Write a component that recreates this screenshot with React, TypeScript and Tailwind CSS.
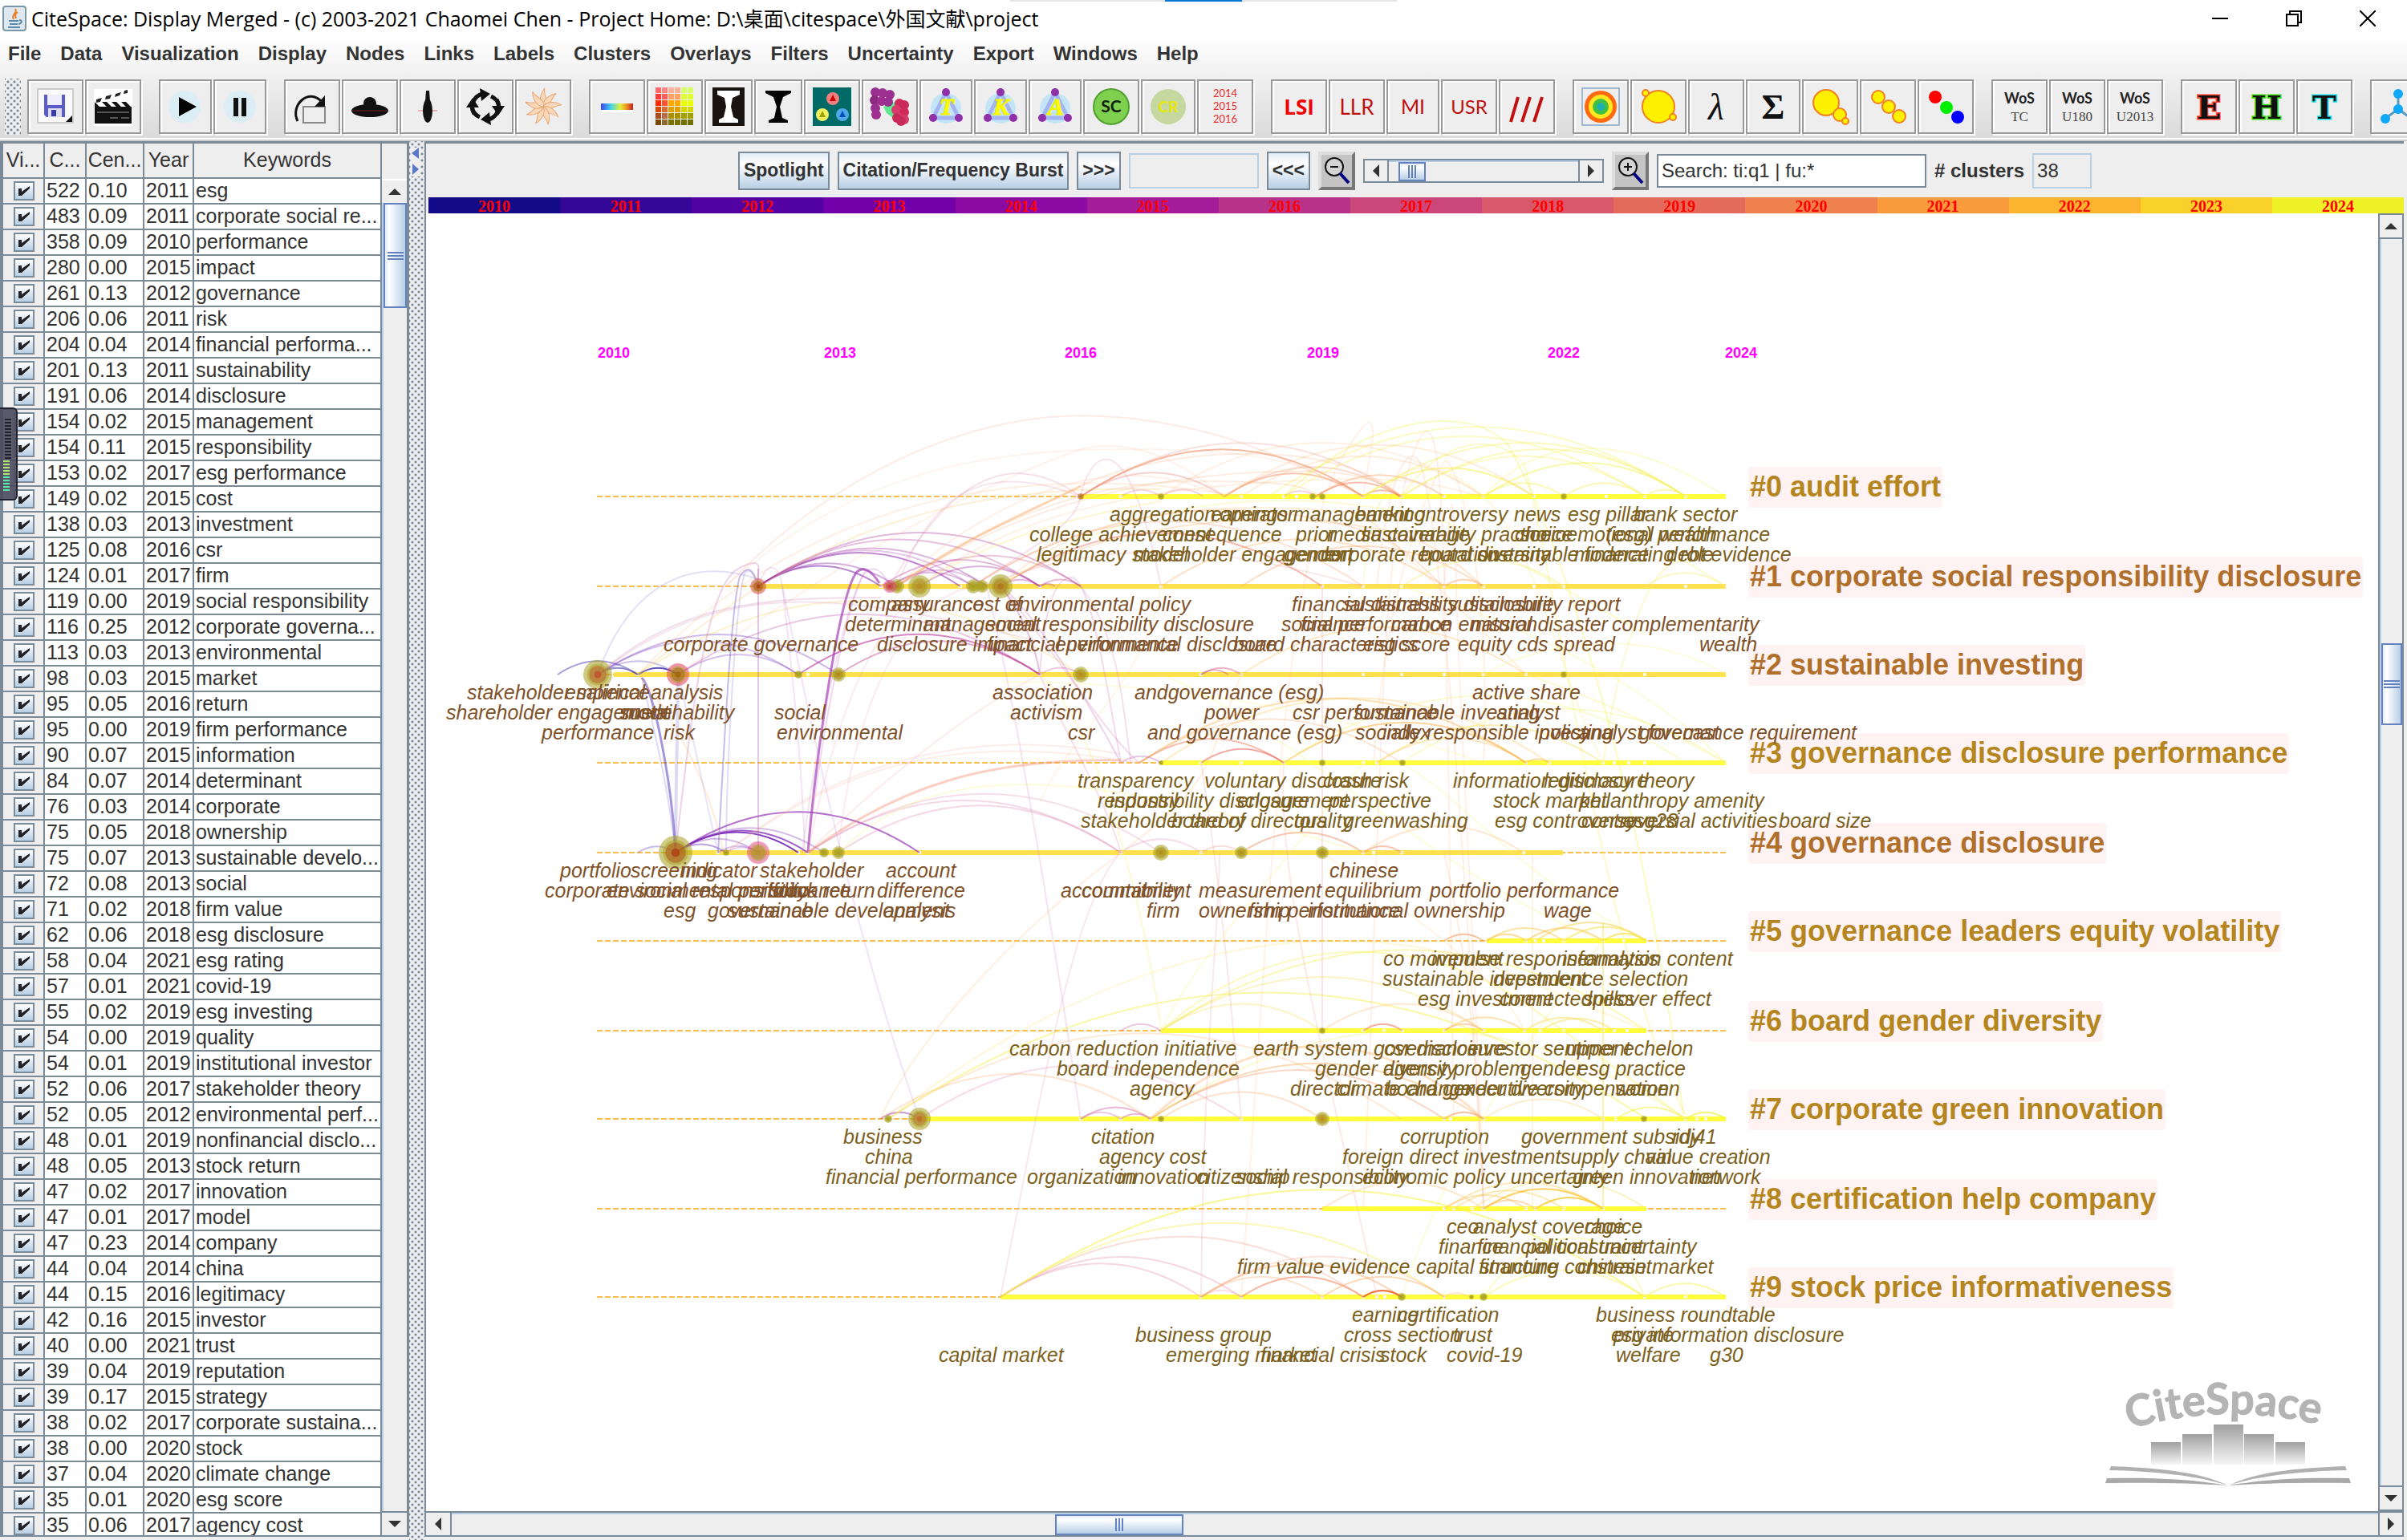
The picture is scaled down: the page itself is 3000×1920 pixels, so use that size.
import { Fragment, ReactNode, useState } from "react";

const MENUS = [
  "File", "Data", "Visualization", "Display", "Nodes", "Links", "Labels", "Clusters",
  "Overlays", "Filters", "Uncertainty", "Export", "Windows", "Help",
];

type Row = [string, string, string, string];

const ROWS: Row[] = [
  ["522", "0.10", "2011", "esg"],
  ["483", "0.09", "2011", "corporate social re..."],
  ["358", "0.09", "2010", "performance"],
  ["280", "0.00", "2015", "impact"],
  ["261", "0.13", "2012", "governance"],
  ["206", "0.06", "2011", "risk"],
  ["204", "0.04", "2014", "financial performa..."],
  ["201", "0.13", "2011", "sustainability"],
  ["191", "0.06", "2014", "disclosure"],
  ["154", "0.02", "2015", "management"],
  ["154", "0.11", "2015", "responsibility"],
  ["153", "0.02", "2017", "esg performance"],
  ["149", "0.02", "2015", "cost"],
  ["138", "0.03", "2013", "investment"],
  ["125", "0.08", "2016", "csr"],
  ["124", "0.01", "2017", "firm"],
  ["119", "0.00", "2019", "social responsibility"],
  ["116", "0.25", "2012", "corporate governa..."],
  ["113", "0.03", "2013", "environmental"],
  ["98", "0.03", "2015", "market"],
  ["95", "0.05", "2016", "return"],
  ["95", "0.00", "2019", "firm performance"],
  ["90", "0.07", "2015", "information"],
  ["84", "0.07", "2014", "determinant"],
  ["76", "0.03", "2014", "corporate"],
  ["75", "0.05", "2018", "ownership"],
  ["75", "0.07", "2013", "sustainable develo..."],
  ["72", "0.08", "2013", "social"],
  ["71", "0.02", "2018", "firm value"],
  ["62", "0.06", "2018", "esg disclosure"],
  ["58", "0.04", "2021", "esg rating"],
  ["57", "0.01", "2021", "covid-19"],
  ["55", "0.02", "2019", "esg investing"],
  ["54", "0.00", "2019", "quality"],
  ["54", "0.01", "2019", "institutional investor"],
  ["52", "0.06", "2017", "stakeholder theory"],
  ["52", "0.05", "2012", "environmental perf..."],
  ["48", "0.01", "2019", "nonfinancial disclo..."],
  ["48", "0.05", "2013", "stock return"],
  ["47", "0.02", "2017", "innovation"],
  ["47", "0.01", "2017", "model"],
  ["47", "0.23", "2014", "company"],
  ["44", "0.04", "2014", "china"],
  ["44", "0.15", "2016", "legitimacy"],
  ["42", "0.16", "2015", "investor"],
  ["40", "0.00", "2021", "trust"],
  ["39", "0.04", "2019", "reputation"],
  ["39", "0.17", "2015", "strategy"],
  ["38", "0.02", "2017", "corporate sustaina..."],
  ["38", "0.00", "2020", "stock"],
  ["37", "0.04", "2020", "climate change"],
  ["35", "0.01", "2020", "esg score"],
  ["35", "0.06", "2017", "agency cost"],
];

const YEARS = [
  ["2010", "bg-[#120a87]"],
  ["2011", "bg-[#350797]"],
  ["2012", "bg-[#5201a3]"],
  ["2013", "bg-[#7200a8]"],
  ["2014", "bg-[#8b0ba4]"],
  ["2015", "bg-[#a41c99]"],
  ["2016", "bg-[#b93289]"],
  ["2017", "bg-[#cb4679]"],
  ["2018", "bg-[#d9586a]"],
  ["2019", "bg-[#e46b5b]"],
  ["2020", "bg-[#ee814d]"],
  ["2021", "bg-[#f99a3d]"],
  ["2022", "bg-[#fcb32e]"],
  ["2023", "bg-[#fad02a]"],
  ["2024", "bg-[#eef126]"],
];

// ---------- timeline data, in window coordinates ----------

const ORIGIN_X = 531;
const ORIGIN_Y = 266;
const GOLD = "#ffe04d";
const YELLOW = "#ffff3c";

interface Cluster {
  y: number;
  name: string;
  from: number;
  to: number;
  bar: string;
  gaps: number[];
  labels: [number, number, string][];
}

const CLUSTERS: Cluster[] = [
  {
    y: 619, name: "#0 audit effort", from: 1347, to: 2151, bar: YELLOW,
    gaps: [1397, 1547, 1600, 1616, 1699, 1747, 1800, 1849, 1912, 2002, 2050, 2101],
    labels: [
      [0, 1383, "aggregation"], [0, 1509, "earnings management"], [0, 1520, "operator"], [0, 1689, "banking"],
      [0, 1750, "controversy"], [0, 1887, "news"], [0, 1954, "esg pillar"], [0, 2036, "bank sector"],
      [1, 1283, "college achievement"], [1, 1449, "consequence"], [1, 1615, "prior"], [1, 1654, "media coverage"],
      [1, 1696, "sustainability practice"], [1, 1888, "choice"], [1, 1894, "socioemotional wealth"], [1, 2002, "(esg) performance"],
      [2, 1292, "legitimacy"], [2, 1411, "stakeholder engagement"], [2, 1413, "model"], [2, 1600, "gender"],
      [2, 1646, "corporate reputation"], [2, 1770, "board diversity"], [2, 1841, "sustainable finance"],
      [2, 1962, "moderating role"], [2, 2077, "debt evidence"],
    ],
  },
  {
    y: 731, name: "#1 corporate social responsibility disclosure", from: 945, to: 2151, bar: GOLD,
    gaps: [1098, 1197, 1296, 1447, 1648, 1699, 1747, 1800, 1849, 1912, 1949, 2101],
    labels: [
      [0, 1057, "company"], [0, 1111, "assurance"], [0, 1200, "cost of"], [0, 1256, "environmental policy"],
      [0, 1610, "financial distress"], [0, 1674, "sustainability disclosure"], [0, 1804, "sustainability report"],
      [1, 1053, "determinant"], [1, 1151, "management"], [1, 1228, "social responsibility disclosure"], [1, 1597, "social performance"],
      [1, 1621, "finance"], [1, 1734, "carbon emission"], [1, 1833, "natural disaster"], [1, 2009, "complementarity"],
      [2, 827, "corporate governance"], [2, 1093, "disclosure impact"], [2, 1230, "financial performance"],
      [2, 1315, "environmental disclosure"], [2, 1537, "board characteristics"], [2, 1699, "esg score"],
      [2, 1817, "equity cds spread"], [2, 2118, "wealth"],
    ],
  },
  {
    y: 841, name: "#2 sustainable investing", from: 765, to: 2151, bar: GOLD,
    gaps: [795, 1007, 1296, 1497, 1547, 1699, 1747, 1800, 1849, 1902, 2050],
    labels: [
      [0, 582, "stakeholder salience"], [0, 704, "empirical analysis"], [0, 1237, "association"],
      [0, 1414, "andgovernance (esg)"], [0, 1835, "active share"],
      [1, 556, "shareholder engagement"], [1, 772, "sustainability"], [1, 775, "model"], [1, 965, "social"], [1, 1259, "activism"],
      [1, 1501, "power"], [1, 1611, "csr performance"], [1, 1687, "sustainable investing"], [1, 1865, "analyst"],
      [2, 675, "performance"], [2, 827, "risk"], [2, 968, "environmental"], [2, 1331, "csr"], [2, 1430, "and governance (esg)"],
      [2, 1689, "socially responsible investing"], [2, 1723, "index"], [2, 1918, "policy"], [2, 1968, "analyst forecast"],
      [2, 2043, "governance requirement"],
    ],
  },
  {
    y: 951, name: "#3 governance disclosure performance", from: 1447, to: 2151, bar: YELLOW,
    gaps: [1497, 1547, 1600, 1699, 1716, 1902, 1931, 1998, 2012, 2030, 2050],
    labels: [
      [0, 1343, "transparency"], [0, 1501, "voluntary disclosure"], [0, 1649, "crash risk"],
      [0, 1811, "information disclosure"], [0, 1924, "legitimacy theory"],
      [1, 1368, "responsibility disclosure"], [1, 1383, "industry"], [1, 1542, "engagement"], [1, 1656, "perspective"],
      [1, 1861, "stock market"], [1, 1968, "philanthropy amenity"],
      [2, 1347, "stakeholder theory"], [2, 1460, "board of directors"], [2, 1613, "quality"], [2, 1674, "greenwashing"],
      [2, 1863, "esg controversy"], [2, 1971, "controversial activities"], [2, 2023, "esg28"], [2, 2217, "board size"],
    ],
  },
  {
    y: 1063, name: "#4 governance disclosure", from: 842, to: 1948, bar: GOLD,
    gaps: [895, 995, 1007, 1146, 1397, 1497, 1699, 1712, 1747, 1899],
    labels: [
      [0, 698, "portfolio"], [0, 786, "screening"], [0, 849, "indicator"], [0, 947, "stakeholder"], [0, 1104, "account"], [0, 1657, "chinese"],
      [1, 679, "corporate social responsibility"], [1, 756, "environmental performance"], [1, 920, "portfolio"], [1, 960, "stock return"],
      [1, 1093, "difference"], [1, 1322, "accountability"], [1, 1348, "commitment"], [1, 1494, "measurement"],
      [1, 1651, "equilibrium"], [1, 1782, "portfolio performance"],
      [2, 827, "esg"], [2, 882, "governance"], [2, 907, "sustainable development"], [2, 1101, "analysis"], [2, 1429, "firm"],
      [2, 1494, "ownership"], [2, 1556, "firm performance"], [2, 1630, "institutional ownership"], [2, 1924, "wage"],
    ],
  },
  {
    y: 1173, name: "#5 governance leaders equity volatility", from: 1853, to: 2052, bar: YELLOW,
    gaps: [1902, 1914, 1924, 1949, 1998, 2024],
    labels: [
      [0, 1724, "co movement"], [0, 1784, "impulse response"], [0, 1947, "information content"], [0, 1977, "analysis"],
      [1, 1723, "sustainable investment"], [1, 1861, "dependence selection"],
      [2, 1767, "esg investment"], [2, 1869, "connectedness"], [2, 1973, "spillover effect"],
    ],
  },
  {
    y: 1285, name: "#6 board gender diversity", from: 1447, to: 2052, bar: YELLOW,
    gaps: [1699, 1725, 1748, 1800, 1849, 1900, 1920, 1949, 1998, 2012, 2028],
    labels: [
      [0, 1258, "carbon reduction initiative"], [0, 1562, "earth system governance"], [0, 1725, "csr disclosure"],
      [0, 1829, "investor sentiment"], [0, 1952, "upper echelon"],
      [1, 1317, "board independence"], [1, 1639, "gender diversity"], [1, 1724, "agency problem"], [1, 1895, "gender"], [1, 1966, "esg practice"],
      [2, 1408, "agency"], [2, 1608, "director"], [2, 1666, "climate change"], [2, 1727, "board gender diversity"],
      [2, 1812, "executive compensation"], [2, 2013, "women"],
    ],
  },
  {
    y: 1395, name: "#7 corporate green innovation", from: 1146, to: 2151, bar: YELLOW,
    gaps: [1347, 1397, 1434, 1547, 1800, 1808, 1849, 1998, 2014, 2101, 2115, 2126],
    labels: [
      [0, 1051, "business"], [0, 1360, "citation"], [0, 1745, "corruption"], [0, 1896, "government subsidy"], [0, 2084, "rdj41"],
      [1, 1078, "china"], [1, 1370, "agency cost"], [1, 1673, "foreign direct investment"], [1, 1945, "supply chain"], [1, 2051, "value creation"],
      [2, 1029, "financial performance"], [2, 1280, "organization"], [2, 1393, "innovation"], [2, 1491, "citizenship"],
      [2, 1540, "social responsibility"], [2, 1698, "economic policy uncertainty"], [2, 1960, "green innovation"], [2, 2107, "network"],
    ],
  },
  {
    y: 1507, name: "#8 certification help company", from: 1648, to: 2052, bar: YELLOW,
    gaps: [1800, 1812, 1835, 1849, 1902, 1914, 1949, 1998],
    labels: [
      [0, 1803, "ceo"], [0, 1836, "analyst coverage"], [0, 1975, "choice"],
      [1, 1793, "finance"], [1, 1841, "financial constraint"], [1, 1902, "political uncertainty"],
      [2, 1542, "firm value evidence"], [2, 1765, "capital structure"], [2, 1843, "financing constraint"], [2, 1966, "chinese market"],
    ],
  },
  {
    y: 1617, name: "#9 stock price informativeness", from: 1247, to: 2151, bar: YELLOW,
    gaps: [1497, 1547, 1648, 1699, 1716, 1726, 1800, 2050, 2101],
    labels: [
      [0, 1685, "earning"], [0, 1742, "certification"], [0, 1989, "business roundtable"],
      [1, 1415, "business group"], [1, 1675, "cross section"], [1, 1811, "trust"], [1, 2008, "esg information disclosure"], [1, 2011, "private"],
      [2, 1170, "capital market"], [2, 1453, "emerging market"], [2, 1571, "financial crisis"], [2, 1720, "stock"],
      [2, 1803, "covid-19"], [2, 2014, "welfare"], [2, 2131, "g30"],
    ],
  },
];

// arcs that stay on one line: cluster, x1, x2, colour, opacity
const HOPS: [number, number, number, string, number][] = [
  [0, 1347, 1699, "#f08050", 0.6], [0, 1526, 1699, "#f08050", 0.5], [0, 1526, 1747, "#f08050", 0.3],
  [0, 1640, 1745, "#f07040", 0.5], [0, 1640, 1800, "#f59050", 0.4], [0, 1699, 1745, "#f07040", 0.5],
  [0, 1347, 1526, "#e06a6a", 0.35], [0, 1347, 1747, "#e07a6a", 0.25], [0, 1397, 1447, "#d0609a", 0.3],
  [0, 1447, 1500, "#d0609a", 0.3], [0, 1600, 1640, "#d0609a", 0.3], [0, 1580, 2101, "#f6f060", 0.4],
  [0, 1600, 2050, "#f6f060", 0.4], [0, 1699, 2101, "#f6f060", 0.45], [0, 1849, 1949, "#f6f060", 0.5],
  [0, 1699, 1912, "#f6f060", 0.7], [0, 1849, 2101, "#f0f040", 0.5], [0, 1747, 2101, "#f6f060", 0.45],
  [0, 1547, 1849, "#fbc080", 0.3], [0, 1526, 1912, "#fbc080", 0.3], [0, 1447, 1849, "#fbc080", 0.25],
  [0, 1949, 2050, "#f6f060", 0.5], [0, 2050, 2101, "#f6f060", 0.5], [0, 1747, 2050, "#f6f060", 0.4],
  [1, 945, 1197, "#8a1fa8", 0.6], [1, 945, 1098, "#7a1fa8", 0.6], [1, 945, 1230, "#a030a0", 0.4],
  [1, 945, 1296, "#b03a9a", 0.35], [1, 945, 1347, "#b03a9a", 0.4], [1, 945, 1213, "#a030b0", 0.3],
  [1, 945, 1118, "#8a1fa8", 0.4], [1, 1098, 1296, "#b03aa0", 0.4], [1, 1118, 1347, "#c04a90", 0.35],
  [1, 1109, 1213, "#a030a0", 0.35], [1, 1109, 1230, "#a030a0", 0.3], [1, 1146, 1296, "#a030a0", 0.4],
  [1, 1296, 1347, "#c04a90", 0.4], [1, 1296, 1315, "#b03aa0", 0.4], [1, 1247, 1296, "#b03aa0", 0.4],
  [1, 1247, 1648, "#e86a5a", 0.5], [1, 1213, 1699, "#f09060", 0.3], [1, 1447, 1800, "#fbb060", 0.4],
  [1, 1547, 1849, "#f8a060", 0.4], [1, 1800, 1849, "#f8a060", 0.5], [1, 1747, 1949, "#f6f080", 0.5], [1, 2050, 2151, "#f6f080", 0.5],
  [2, 695, 795, "#3a2aa8", 0.5], [2, 745, 795, "#3a2aa8", 0.6], [2, 795, 845, "#3a2aa8", 0.9],
  [2, 745, 845, "#5a3ab8", 0.35], [2, 745, 995, "#7a3ac0", 0.35], [2, 745, 1045, "#7a3ac0", 0.4],
  [2, 845, 995, "#7a3ac0", 0.35], [2, 845, 1296, "#b0309a", 0.3], [2, 995, 1296, "#b8309a", 0.65],
  [2, 1045, 1296, "#c04a90", 0.5], [2, 795, 1347, "#f0d050", 0.3], [2, 1296, 1347, "#d070a0", 0.4],
  [2, 1497, 1547, "#d05a80", 0.5], [2, 1497, 1531, "#d05a80", 0.5], [2, 1547, 1902, "#fbc060", 0.4],
  [3, 1420, 1600, "#ee7050", 0.5], [3, 1420, 1902, "#fbb040", 0.45], [3, 1497, 1600, "#e8605a", 0.6],
  [3, 1420, 1747, "#f0a060", 0.3], [3, 1600, 1902, "#fbb040", 0.6], [3, 1716, 1902, "#fbb040", 0.35],
  [3, 1397, 1447, "#c060c0", 0.4], [3, 1447, 1931, "#fbc050", 0.35], [3, 1902, 1931, "#fbb040", 0.5],
  [3, 1716, 1998, "#f6e060", 0.5], [3, 1600, 2101, "#f6f080", 0.4], [3, 1747, 2151, "#f6f080", 0.4],
  [4, 842, 1146, "#8a1fb0", 0.7], [4, 842, 995, "#6a10b0", 0.9], [4, 842, 1007, "#7a20b8", 0.8],
  [4, 842, 1027, "#8a40c0", 0.4], [4, 842, 905, "#6a30b8", 0.5], [4, 842, 945, "#8a40c0", 0.4],
  [4, 795, 842, "#6a40c0", 0.4], [4, 895, 945, "#9a50c8", 0.4], [4, 905, 945, "#9a50c8", 0.3],
  [4, 1007, 1397, "#d870a0", 0.3], [4, 1007, 1447, "#d870a0", 0.25], [4, 1045, 1397, "#d870a0", 0.3],
  [4, 1547, 1699, "#f08050", 0.5], [4, 1699, 1747, "#f08050", 0.5], [4, 1497, 1547, "#e08080", 0.3], [4, 1699, 1899, "#fbc080", 0.4],
  [4, 1397, 1497, "#d880b0", 0.3],
  [5, 1800, 1849, "#f59050", 0.6], [5, 1853, 1902, "#fbc040", 0.6], [5, 1902, 1998, "#fbc040", 0.6],
  [5, 1914, 2052, "#f8d050", 0.6], [5, 1949, 2052, "#f6e040", 0.6], [5, 1998, 2052, "#f6e040", 0.8], [5, 1853, 1949, "#fbc040", 0.5],
  [6, 1397, 1447, "#d060a0", 0.4], [6, 1699, 1748, "#f06a50", 0.6], [6, 1800, 1849, "#f8a060", 0.5],
  [6, 1447, 1648, "#f6e060", 0.4], [6, 1447, 2052, "#f6f060", 0.5], [6, 1447, 1849, "#f6e060", 0.4],
  [6, 1800, 1900, "#fbc050", 0.5], [6, 1900, 1998, "#f6e060", 0.6], [6, 1920, 2012, "#f6e060", 0.6], [6, 1648, 1849, "#fbc080", 0.4],
  [7, 1097, 1146, "#8a20b0", 0.5], [7, 1347, 1397, "#d060b0", 0.4], [7, 1347, 1434, "#d060a0", 0.5],
  [7, 1397, 1434, "#d060a0", 0.5], [7, 1146, 1547, "#e080b0", 0.3], [7, 1097, 1434, "#fbb070", 0.35],
  [7, 1107, 1747, "#fbb070", 0.3], [7, 1107, 2052, "#f6f060", 0.6], [7, 1434, 1849, "#fbb060", 0.5],
  [7, 1434, 1800, "#f09060", 0.4], [7, 1447, 1648, "#fbb070", 0.4], [7, 1434, 2101, "#f6f080", 0.4],
  [7, 1800, 1849, "#f59050", 0.6], [7, 2014, 2101, "#f0f040", 0.6], [7, 2101, 2151, "#f0f040", 0.8], [7, 1849, 1998, "#fbd080", 0.4],
  [8, 1648, 1849, "#fbc080", 0.4], [8, 1800, 1902, "#fbc060", 0.5], [8, 1812, 1949, "#fbd060", 0.5],
  [8, 1849, 1998, "#fbc020", 0.8], [8, 1849, 1914, "#f8b060", 0.5], [8, 1914, 1998, "#fbc020", 0.7],
  [8, 1800, 1998, "#fbd060", 0.5], [8, 1835, 2052, "#f6e080", 0.5], [8, 1914, 1998, "#f6d040", 0.5],
  [9, 1247, 1497, "#e080a0", 0.35], [9, 1247, 1547, "#e080a0", 0.35], [9, 1247, 1699, "#f09a80", 0.35],
  [9, 1247, 1800, "#f6f060", 0.5], [9, 1247, 2050, "#f6f040", 0.6], [9, 1497, 1648, "#fbb080", 0.4],
  [9, 1497, 1747, "#f8a060", 0.5], [9, 1547, 1699, "#f07a50", 0.6], [9, 1497, 1547, "#f090a0", 0.3],
  [9, 1648, 1800, "#f8b060", 0.5], [9, 1699, 1747, "#f06020", 0.8], [9, 1699, 1747, "#f06020", 0.6],
  [9, 1497, 1800, "#f8a080", 0.3], [9, 1849, 2050, "#f0f040", 0.4], [9, 1800, 1830, "#fbc080", 0.4], [9, 2050, 2151, "#f0f040", 0.5],
];

// links between lines, drawn as plain path data
const LINKS: [string, string, number, number][] = [
  ["M842 1063C838 980 815 860 800 845", "#4a2ab8", 0.7, 3],
  ["M842 1063C830 960 812 900 800 845", "#6a50c8", 0.3, 2],
  ["M842 1063C842 980 845 900 845 841", "#6a50c8", 0.3, 4],
  ["M842 1063C860 900 880 730 920 709S940 720 945 731", "#c060a8", 0.4, 2],
  ["M895 1063C900 980 910 760 922 719Q934 700 942 722", "#5a40c0", 0.5, 2],
  ["M905 1063C905 980 915 760 928 715Q936 704 945 731", "#8a70d0", 0.35, 2],
  ["M945 1063V709", "#b060b8", 0.5, 2],
  ["M1007 1063C1015 960 1045 740 1068 713Q1080 702 1096 727", "#9a2ab0", 0.9, 3],
  ["M1007 1063C1020 940 1055 740 1080 712Q1096 702 1109 731", "#c060c0", 0.35, 2],
  ["M1000 1063C1015 940 1050 760 1078 712", "#c880c8", 0.3, 2],
  ["M945 731C955 700 970 700 975 731C990 860 1000 960 1003 1063", "#d090d0", 0.35, 2],
  ["M745 841C780 740 850 690 945 722", "#8a80e0", 0.35, 2],
  ["M745 841C850 750 950 745 1098 745", "#c060a0", 0.3, 2],
  ["M745 841C900 720 1040 735 1296 800", "#d080b0", 0.3, 2],
  ["M795 841C900 730 1040 640 1230 612Q1380 590 1547 619", "#fbc090", 0.35, 2],
  ["M795 841C950 720 1100 600 1447 610", "#fbd080", 0.45, 2],
  ["M795 841C830 880 880 960 902 1063", "#fbb060", 0.35, 2],
  ["M845 841C860 900 880 1000 895 1063", "#8a80e0", 0.3, 2],
  ["M905 731C1040 590 1200 520 1347 518C1500 520 1600 570 1699 619", "#f8b8a0", 0.4, 2],
  ["M905 731C1050 600 1200 560 1400 560S1620 580 1699 619", "#fbc0a0", 0.25, 2],
  ["M842 841C1000 740 1150 630 1347 560Q1430 540 1526 619", "#fbc0a0", 0.3, 2],
  ["M1109 731C1160 640 1210 590 1270 590Q1310 592 1347 619", "#e090b0", 0.4, 2],
  ["M1118 731C1160 620 1220 570 1347 619", "#e090b0", 0.35, 2],
  ["M1213 731C1270 690 1340 660 1347 619S1400 500 1447 731", "#e090b0", 0.35, 2],
  ["M1118 731C1200 670 1280 640 1347 606", "#f8a860", 0.7, 3],
  ["M1347 606C1440 560 1660 540 1747 619", "#f8b080", 0.35, 2],
  ["M1118 731C1220 660 1340 600 1490 600S1620 610 1648 619", "#f8b080", 0.35, 2],
  ["M1118 731C1250 640 1400 600 1547 590S1720 600 1747 619", "#f8b080", 0.35, 2],
  ["M1146 731C1260 640 1420 610 1600 600S1800 610 1849 619", "#fbc080", 0.3, 2],
  ["M1118 731C1200 650 1290 612 1347 600S1460 590 1526 619", "#fbc0a0", 0.35, 2],
  ["M1146 731C1230 670 1360 640 1447 625", "#f6e880", 0.5, 2],
  ["M1213 731C1300 670 1450 620 1600 640S1760 700 1800 731", "#f8a070", 0.4, 2],
  ["M1247 731C1340 670 1500 640 1640 650S1800 690 1849 731", "#f8a860", 0.4, 2],
  ["M1247 731C1400 620 1600 600 1800 650T2050 790", "#f6f080", 0.5, 2],
  ["M1247 731C1340 640 1500 620 1700 640T1902 841", "#fbc880", 0.4, 2],
  ["M1224 731C1400 660 1550 690 1699 731", "#f0a0a0", 0.35, 2],
  ["M1247 731C1290 760 1370 900 1397 951", "#c060b0", 0.4, 2],
  ["M1247 731C1300 790 1380 920 1420 951", "#d080b0", 0.4, 2],
  ["M1247 731C1270 760 1290 800 1296 841", "#b84a9a", 0.5, 2],
  ["M1296 841C1300 780 1310 720 1335 720S1380 860 1397 951", "#d080b0", 0.4, 2],
  ["M1347 731C1400 800 1400 900 1410 951", "#d080b0", 0.35, 2],
  ["M1230 731C1270 900 1310 1150 1347 1395", "#d090c8", 0.35, 2],
  ["M1296 841C1320 900 1380 1000 1397 1063", "#d880b0", 0.35, 2],
  ["M975 731C1010 900 1060 1150 1146 1395", "#c090d8", 0.35, 2],
  ["M1397 1063C1340 1120 1300 1350 1247 1617", "#e0a0b8", 0.35, 2],
  ["M1296 841C1180 900 1050 1020 1007 1063", "#f0b0b0", 0.35, 2],
  ["M1007 1063C1120 980 1230 945 1397 948", "#f09070", 0.6, 3],
  ["M905 1063C1020 970 1180 900 1397 940", "#f0a8a0", 0.3, 2],
  ["M905 1063C1080 930 1230 920 1420 951", "#f8b8a0", 0.35, 2],
  ["M1045 1063C1150 960 1300 940 1700 1063", "#f6f080", 0.4, 2],
  ["M1045 1063C1060 900 1120 750 1213 731", "#e8a0b8", 0.3, 2],
  ["M1007 1063C1040 900 1080 800 1140 740", "#e8a0b8", 0.3, 2],
  ["M1097 1395C1150 1280 1280 1150 1397 1063S1500 960 1547 841", "#fbc890", 0.4, 2],
  ["M1296 841C1370 900 1430 1150 1447 1285", "#f6f080", 0.5, 2],
  ["M1447 731C1430 850 1330 920 1296 1000", "#fbd0a0", 0.3, 2],
  ["M1648 731V1285", "#f0a0a0", 0.4, 2],
  ["M1547 1617C1580 1150 1600 700 1670 576S1699 600 1699 619", "#f8c0a0", 0.3, 2],
  ["M1497 1617C1500 1300 1520 1150 1520 1063", "#e8a0a8", 0.35, 2],
  ["M1547 1395C1530 1200 1520 1100 1497 951", "#e8a0a8", 0.35, 2],
  ["M1600 951C1590 1100 1660 1350 1716 1617", "#f0a8a0", 0.35, 2],
  ["M1699 1507C1720 1100 1715 700 1760 570S1800 700 1812 1395", "#f8c0a0", 0.35, 2],
  ["M1716 731C1730 600 1750 560 1765 570S1810 760 1849 1500", "#f8b8a0", 0.35, 2],
  ["M1800 731C1808 600 1812 590 1815 731S1840 1200 1849 1507", "#f8b8a0", 0.3, 2],
  ["M1849 951C1860 700 1810 560 1800 576S1730 700 1712 951", "#f8c8a0", 0.35, 2],
  ["M1699 731C1710 560 1780 560 1849 619S1960 900 2000 951", "#f6e880", 0.4, 2],
  ["M1600 619C1700 520 1830 500 1880 555C1950 680 2050 1000 2098 1390", "#f0f040", 0.45, 2],
  ["M1747 619C1800 540 1870 540 1900 580C1940 720 2000 1200 2101 1390", "#f6f060", 0.45, 2],
  ["M1849 619C1940 520 2060 560 2151 619", "#f6f060", 0.4, 2],
  ["M1447 1285C1600 1150 1780 1170 1900 1250T2101 1395", "#f6f060", 0.6, 2],
  ["M1107 1395C1400 1170 1650 1140 1849 1200T2052 1285", "#fbe060", 0.35, 2],
  ["M1434 1395C1550 1290 1700 1260 1849 1395", "#f8a860", 0.5, 3],
  ["M1998 1150V1507", "#f6e040", 0.6, 2],
  ["M1910 1063V1507", "#fbd0a0", 0.4, 2],
  ["M1849 1507C1840 1300 1830 1200 1800 1063", "#f8b890", 0.35, 2],
  ["M1747 1617C1800 1450 1900 1300 1998 1173", "#f6f080", 0.4, 2],
  ["M1648 1063C1700 1100 1860 1200 1900 1285", "#fbd090", 0.35, 2],
  ["M1747 951C1830 1000 1900 1100 2052 1173", "#f6f080", 0.4, 2],
  ["M1447 841C1600 900 1800 1100 1998 1173", "#f6f080", 0.4, 2],
  ["M1250 850C1500 850 1700 900 1849 951", "#f6f080", 0.35, 2],
  ["M1447 1285C1500 1180 1600 1080 1699 951", "#f6f080", 0.4, 2],
  ["M1849 1617C1900 1540 2000 1500 2050 1617", "#f0f040", 0.4, 2],
  ["M1998 951C2020 800 2060 690 2101 700T2151 731", "#f6f080", 0.5, 2],
  ["M1849 841C1920 800 2050 780 2151 841", "#f6f080", 0.4, 2],
  ["M1902 841C1960 860 2060 900 2151 951", "#f6f080", 0.5, 2],
  ["M1747 731C1900 780 2050 850 2151 951", "#f6f080", 0.4, 2],
];

const OLIVE = "#a8a020";
const RED = "#b04818";
// x, y, r, halo, core
const NODES: [number, number, number, string, string][] = [
  [745, 841, 18, OLIVE, "#c05a30"], [845, 841, 14, "#e0405a", "#a06a10"], [995, 841, 5, OLIVE, OLIVE],
  [1045, 841, 9, OLIVE, "#b08a20"], [1347, 841, 10, OLIVE, "#b88a20"], [1949, 841, 4, OLIVE, OLIVE],
  [945, 731, 10, "#d84a4a", RED], [1118, 731, 9, OLIVE, "#b08a20"], [1109, 731, 8, "#e83a9a", "#d0305a"],
  [1146, 731, 14, OLIVE, "#b8902a"], [1213, 731, 9, OLIVE, OLIVE], [1224, 731, 8, OLIVE, OLIVE],
  [1247, 731, 15, OLIVE, "#b07a20"],
  [842, 1063, 21, OLIVE, RED], [945, 1063, 14, "#e0508a", "#b89030"], [905, 1063, 4, OLIVE, OLIVE],
  [1027, 1063, 6, OLIVE, OLIVE], [1045, 1063, 8, OLIVE, OLIVE], [1447, 1063, 10, OLIVE, "#b09020"],
  [1547, 1063, 8, OLIVE, "#b09020"], [1648, 1063, 8, OLIVE, "#b09020"],
  [1347, 619, 4, "#c06a30", "#c06a30"], [1447, 619, 4, OLIVE, OLIVE], [1636, 619, 4, OLIVE, OLIVE],
  [1648, 619, 4, OLIVE, OLIVE], [1949, 619, 4, OLIVE, OLIVE],
  [1447, 951, 3, OLIVE, OLIVE], [1648, 951, 4, OLIVE, OLIVE], [1748, 951, 4, OLIVE, OLIVE],
  [1648, 1285, 4, OLIVE, OLIVE], [1107, 1395, 5, OLIVE, OLIVE], [1146, 1395, 14, OLIVE, "#c07030"],
  [1447, 1395, 4, OLIVE, OLIVE], [1648, 1395, 9, OLIVE, "#c09020"], [2049, 1395, 4, OLIVE, OLIVE],
  [1747, 1617, 5, OLIVE, OLIVE], [1834, 1617, 3, OLIVE, OLIVE], [1849, 1617, 5, OLIVE, OLIVE],
];

const AXIS: [number, string][] = [
  [765, "2010"], [1047, "2013"], [1347, "2016"], [1649, "2019"], [1949, "2022"], [2170, "2024"],
];

// ---------- icons ----------

function Triangle({ dir }: { dir: "up" | "down" | "left" | "right" }) {
  const d = {
    up: "M8 4L16 12H0Z",
    down: "M0 4H16L8 12Z",
    left: "M4 8L12 0V16Z",
    right: "M12 8L4 0V16Z",
  }[dir];
  return (
    <svg viewBox="0 0 16 16" className="w-4 h-4" fill="#333">
      <path d={d} />
    </svg>
  );
}

function Graph({ letter }: { letter: string }) {
  return (
    <>
      <circle cx="24" cy="26" r="19" fill="#c4e4f8" />
      <path d="M24 6L8 38H40Z" fill="none" stroke="#a4b4f0" strokeWidth="5" />
      <circle cx="24" cy="6" r="5" fill="#9030a8" />
      <circle cx="8" cy="38" r="5" fill="#9030a8" />
      <circle cx="40" cy="38" r="5" fill="#9030a8" />
      <text
        x="25" y="34" textAnchor="middle" fill="#ffff00" stroke="#f0f000" strokeWidth="1"
        className="font-['Liberation_Serif'] text-[30px] italic font-bold"
      >
        {letter}
      </text>
    </>
  );
}

const HEAT = ["#ff6a6a", "#ff3a3a", "#ff2a00", "#d84a00", "#a84a20", "#784a00"];
const HEAT_MID = ["#ffb09a", "#ffa060", "#ffa800", "#e0a000", "#a89000", "#787000"];
const HEAT_END = ["#d8ff6a", "#e0ff30", "#e8ff00", "#d8d800", "#a0a000", "#707000"];

const BLOBS: [number, number, string][] = [
  [6, 6, "#9a3090"], [15, 7, "#a03090"], [24, 9, "#9a3090"], [5, 16, "#8a2a80"], [14, 17, "#a03090"], [22, 18, "#9a3090"],
  [6, 26, "#9a3090"], [7, 34, "#a03090"], [36, 20, "#d02a5a"], [42, 22, "#c82a5a"], [32, 28, "#d83a6a"], [42, 31, "#d02a5a"],
  [33, 38, "#c82a5a"], [42, 40, "#d83a6a"], [38, 42, "#c82a5a"],
];

const icons: Record<string, ReactNode> = {
  save: (
    <>
      <rect x="2" y="2" width="44" height="42" fill="#fafafa" stroke="#ccc" strokeWidth="2" />
      <path d="M10 9H36V37H13L10 34Z" fill="#5a5ac8" />
      <rect x="14" y="9" width="18" height="13" fill="#eef" />
      <rect x="15" y="26" width="17" height="11" fill="#dde" />
      <rect x="19" y="28" width="6" height="8" fill="#3a3aa8" />
      <path d="M45 35V43H37Z" fill="#111" />
    </>
  ),
  clapper: (
    <>
      <rect width="48" height="46" y="2" fill="#fff" />
      <path d="M3 15l7-2-2 5-5 1ZM15 11l7-2-2 5-6 1ZM27 8l7-2-2 4-6 2ZM38 4l4-1v4l-5 1Z" fill="#222" />
      <path d="M1 24H47V45H1Z" fill="#111" />
      <path d="M1 18l6 6H1ZM10 18h6l6 6h-6ZM22 18h6l6 6h-6ZM34 18h6l6 6h-6Z" fill="#111" />
      <path d="M4 31H44M20 38H30M34 38H44" stroke="#555" strokeWidth="2" />
    </>
  ),
  play: (
    <>
      <circle cx="23" cy="24" r="20" fill="#dceef5" />
      <path d="M16 12L38 24L16 36Z" fill="#050505" />
    </>
  ),
  pause: (
    <>
      <circle cx="24" cy="24" r="20" fill="#dceef5" />
      <path d="M16 13h6v23h-6ZM26 13h6v23h-6Z" fill="#111" />
    </>
  ),
  rotate: (
    <>
      <rect x="13" y="24" width="27" height="20" fill="#eee" stroke="#888" strokeWidth="2" />
      <path d="M6 42C-4 22 20 0 36 18" fill="none" stroke="#111" strokeWidth="3" />
      <path d="M40 10V24H27Z" fill="#111" />
    </>
  ),
  wide: (
    <>
      <circle cx="24" cy="20" r="8" fill="#111" />
      <ellipse cx="24" cy="29" rx="23" ry="8" fill="#111" />
      <path d="M2 29H46" stroke="#802020" strokeWidth="1" />
    </>
  ),
  tall: (
    <>
      <path d="M12 29H36" stroke="#f0b0b0" strokeWidth="2" />
      <ellipse cx="24" cy="29" rx="6" ry="15" fill="#111" />
      <path d="M22 4h4l1 14h-6Z" fill="#111" />
    </>
  ),
  refresh: (
    <>
      <path d="M10 33A17 17 0 0 1 20 8M38 15A17 17 0 0 1 28 40" fill="none" stroke="#111" strokeWidth="5" />
      <path d="M31 11A17 17 0 0 1 41 24M17 37A17 17 0 0 1 7 24" fill="none" stroke="#111" strokeWidth="5" />
      <path d="M17 1L30 8L19 17ZM48 23L40 35L32 23ZM31 47L18 40L29 31ZM0 25L8 13L16 25Z" fill="#111" />
    </>
  ),
  burst: (
    <g fill="#f8d8b8" stroke="#e8a878" strokeWidth="1">
      {[0, 40, 80, 120, 160, 200, 240, 280, 320].map((a) => (
        <path key={a} d="M24 24C18 18 20 8 26 1C24 9 30 14 27 22Z" transform={`rotate(${a} 24 24)`} />
      ))}
    </g>
  ),
  rainbow: (
    <>
      <defs>
        <linearGradient id="rb">
          <stop offset="0" stopColor="#4040f0" />
          <stop offset="0.3" stopColor="#40d0f0" />
          <stop offset="0.6" stopColor="#e0f040" />
          <stop offset="0.8" stopColor="#f09020" />
          <stop offset="1" stopColor="#c02020" />
        </linearGradient>
      </defs>
      <rect x="4" y="20" width="40" height="8" fill="url(#rb)" />
      <rect x="4" y="28" width="40" height="3" fill="#fff" />
    </>
  ),
  heat: (
    <>
      {HEAT.map((c, r) => (
        <Fragment key={c}>
          <rect x="0" y={r * 8} width="7" height="7" fill={c} />
          <rect x="8" y={r * 8} width="7" height="7" fill={c} opacity="0.8" />
          <rect x="16" y={r * 8} width="7" height="7" fill={HEAT_MID[r]} />
          <rect x="24" y={r * 8} width="7" height="7" fill={HEAT_MID[r]} />
          <rect x="32" y={r * 8} width="7" height="7" fill={HEAT_END[r]} />
          <rect x="40" y={r * 8} width="7" height="7" fill={HEAT_END[r]} />
        </Fragment>
      ))}
    </>
  ),
  columnDark: (
    <>
      <rect x="4" width="40" height="48" fill="#1a1410" />
      <path d="M10 4H38V9L29 13L27 24L30 37L36 40V44H12V40L18 37L21 24L19 13L10 9Z" fill="#fff" />
    </>
  ),
  column: <path d="M8 4H40V7L30 12L26 24L29 38L36 41V44H12V41L19 38L22 24L18 12L8 7Z" fill="#050505" />,
  trio: (
    <>
      <rect width="48" height="48" fill="#006a66" />
      <circle cx="25" cy="14" r="8" fill="#f08080" />
      <circle cx="12" cy="34" r="8" fill="#f0f060" />
      <circle cx="37" cy="34" r="8" fill="#50a8e8" />
      <path d="M25 9l4 8h-8Z" fill="#c00" />
      <path d="M12 29l4 8H8Z" fill="#a0a000" />
      <path d="M37 29l4 8h-8Z" fill="#0050c0" />
    </>
  ),
  blobs: (
    <>
      <path d="M16 24L30 18L46 24L28 38L20 32Z" fill="#60e890" />
      {BLOBS.map(([x, y, c]) => (
        <circle key={`${x}-${y}`} cx={x} cy={y} r="6" fill={c} />
      ))}
    </>
  ),
  graphT: <Graph letter="T" />,
  graphK: <Graph letter="K" />,
  graphA: <Graph letter="A" />,
  sc: (
    <>
      <circle cx="24" cy="24" r="22" fill="#80d050" stroke="#50a030" strokeWidth="2" />
      <text x="24" y="31" textAnchor="middle" fill="#102010" className="font-['Lato'] text-[21px] font-bold">SC</text>
    </>
  ),
  cr: (
    <>
      <circle cx="24" cy="24" r="22" fill="#c4d8a0" />
      <text x="24" y="31" textAnchor="middle" fill="#e8e800" className="font-['Lato'] text-[19px] font-bold">CR</text>
    </>
  ),
  years: (
    <g fill="#e03030" textAnchor="middle" className="font-['Lato'] text-[13px]">
      <text x="24" y="12">2014</text>
      <text x="24" y="28">2015</text>
      <text x="24" y="44">2016</text>
    </g>
  ),
  lsi: <text x="24" y="34" textAnchor="middle" fill="#f00000" className="font-['Open_Sans'] text-[26px] font-bold">LSI</text>,
  llr: <text x="24" y="34" textAnchor="middle" fill="#c01010" className="font-['Lato'] text-[26px]">LLR</text>,
  mi: <text x="24" y="33" textAnchor="middle" fill="#c01010" className="font-['Lato'] text-[25px]">MI</text>,
  usr: <text x="24" y="33" textAnchor="middle" fill="#c01010" className="font-['Lato'] text-[24px]">USR</text>,
  slashes: <path d="M4 43L13 12M18 43L28 12M33 43L43 12" stroke="#c01010" strokeWidth="4" fill="none" />,
  target: (
    <>
      <rect x="1" y="1" width="46" height="46" fill="none" stroke="#a0b8d0" strokeWidth="2" />
      <circle cx="24" cy="24" r="20" fill="#ff6a10" />
      <circle cx="24" cy="24" r="15" fill="#ffe820" />
      <circle cx="24" cy="24" r="10" fill="#40c040" />
      <circle cx="24" cy="24" r="5" fill="#20b0b0" />
    </>
  ),
  sun: (
    <g fill="#fff000" stroke="#f08020" strokeWidth="2">
      <circle cx="24" cy="24" r="20" />
      <circle cx="8" cy="7" r="4" />
      <circle cx="42" cy="37" r="4" />
    </g>
  ),
  lambda: <text x="24" y="40" textAnchor="middle" fill="#111" className="font-['Liberation_Serif'] text-[46px] italic">λ</text>,
  sigma: <text x="24" y="39" textAnchor="middle" fill="#111" className="font-['Liberation_Serif'] text-[44px] font-bold">Σ</text>,
  ballsDown: (
    <g fill="#fff000" stroke="#f08020" strokeWidth="2">
      <circle cx="19" cy="19" r="16" />
      <circle cx="36" cy="34" r="8" />
      <circle cx="43" cy="42" r="4" />
    </g>
  ),
  ballsThree: (
    <g fill="#fff000" stroke="#f08020" strokeWidth="2">
      <circle cx="12" cy="12" r="8" />
      <circle cx="25" cy="24" r="8" />
      <circle cx="38" cy="36" r="8" />
    </g>
  ),
  rgb: (
    <>
      <circle cx="11" cy="12" r="8" fill="#ff0000" />
      <circle cx="25" cy="25" r="8" fill="#00f000" />
      <circle cx="39" cy="37" r="8" fill="#0000ff" />
    </>
  ),
  wosTc: <Wos sub="TC" />,
  wosU180: <Wos sub="U180" />,
  wosU2013: <Wos sub="U2013" />,
  e: <Slab letter="E" glow="#ff4030" />,
  h: <Slab letter="H" glow="#40e010" />,
  t: <Slab letter="T" glow="#20e0e8" />,
  network: (
    <>
      <path d="M24 8V27L9 38M24 27L42 40" stroke="#5a9ac0" strokeWidth="3" fill="none" />
      <circle cx="24" cy="8" r="6" fill="#10a8f8" />
      <circle cx="24" cy="27" r="6" fill="#10a8f8" />
      <circle cx="8" cy="39" r="6" fill="#10a8f8" />
      <circle cx="42" cy="40" r="6" fill="#10a8f8" />
    </>
  ),
};

function Wos({ sub }: { sub: string }) {
  return (
    <g textAnchor="middle">
      <text x="24" y="20" fill="#222" className="font-['Lato'] text-[18px] font-bold">WoS</text>
      <text x="24" y="42" fill="#444" className="font-['Liberation_Serif'] text-[17px]">{sub}</text>
    </g>
  );
}

function Slab({ letter, glow }: { letter: string; glow: string }) {
  return (
    <text
      x="24" y="39" textAnchor="middle" fill="#111" stroke={glow} strokeWidth="3" paintOrder="stroke"
      className="font-['DejaVu_Serif'] text-[40px] font-bold"
    >
      {letter}
    </text>
  );
}

const TOOLS: [string, string][][] = [
  [["save", "w-[70px]"], ["clapper", "w-[70px]"]],
  [["play", "w-[66px]"], ["pause", "w-[66px]"]],
  [["rotate", "w-[70px]"], ["wide", "w-[70px]"], ["tall", "w-[70px]"], ["refresh", "w-[70px]"], ["burst", "w-[70px]"]],
  [
    ["rainbow", "w-[70px]"], ["heat", "w-[70px]"], ["columnDark", "w-[60px]"], ["column", "w-[60px]"], ["trio", "w-[70px]"],
    ["blobs", "w-[70px]"], ["graphT", "w-[66px]"], ["graphK", "w-[66px]"], ["graphA", "w-[66px]"], ["sc", "w-[70px]"],
    ["cr", "w-[68px]"], ["years", "w-[70px]"],
  ],
  [["lsi", "w-[70px]"], ["llr", "w-[70px]"], ["mi", "w-[66px]"], ["usr", "w-[70px]"], ["slashes", "w-[70px]"]],
  [
    ["target", "w-[70px]"], ["sun", "w-[70px]"], ["lambda", "w-[70px]"], ["sigma", "w-[68px]"],
    ["ballsDown", "w-[70px]"], ["ballsThree", "w-[70px]"], ["rgb", "w-[70px]"],
  ],
  [["wosTc", "w-[70px]"], ["wosU180", "w-[70px]"], ["wosU2013", "w-[70px]"]],
  [["e", "w-[70px]"], ["h", "w-[70px]"], ["t", "w-[70px]"]],
  [["network", "w-[70px]"]],
];

const DOTS =
  "bg-[#eeeeee] bg-[radial-gradient(#7a8a99_1px,transparent_2px),radial-gradient(#7a8a99_1px,transparent_2px)] bg-[length:8px_8px] bg-[position:0_0,4px_4px]";

const METAL_BUTTON =
  "h-12 px-[5px] border-2 border-[#7a8a99] bg-linear-to-b from-[#e2ebf4] via-white via-30% to-[#b8cfe5] text-[23px] font-bold whitespace-nowrap";

// ---------- window chrome ----------

function TitleBar() {
  return (
    <header className="relative flex items-center h-[46px] pl-[3px] bg-white shrink-0">
      <div className="absolute top-0 left-[1259px] w-[482px] h-[2px] bg-[#e5e5e5] flex justify-center">
        <div className="w-24 bg-[#0078d7]" />
      </div>
      <svg viewBox="0 0 30 32" className="w-[30px] h-8">
        <rect x="1" y="1" width="28" height="30" rx="3" fill="#dfe8ee" stroke="#7a98a8" strokeWidth="2" />
        <path d="M16 4C20 9 10 11 14 17M19 8C15 11 16 13 17 16" stroke="#e8802a" strokeWidth="2" fill="none" />
        <path d="M8 19H20M9 23H19M7 27H22M21 18C25 18 25 22 20 23" stroke="#5a88a8" strokeWidth="2" fill="none" />
      </svg>
      <h1 className="ml-[6px] flex-1 font-['Open_Sans','Noto_Sans_CJK_SC',sans-serif] text-[25px] leading-8 text-black whitespace-nowrap">
        CiteSpace: Display Merged - (c) 2003-2021 Chaomei Chen - Project Home: D:\桌面\citespace\外国文献\project
      </h1>
      <div className="flex gap-[72px] pr-[39px]">
        <button aria-label="Minimize">
          <svg viewBox="0 0 20 20" className="w-5 h-5"><path d="M0 10H20" stroke="#000" strokeWidth="2" /></svg>
        </button>
        <button aria-label="Restore">
          <svg viewBox="0 0 20 20" className="w-5 h-5" fill="none" stroke="#000" strokeWidth="2">
            <path d="M1 5H15V19H1ZM5 5V1H19V15H15" />
          </svg>
        </button>
        <button aria-label="Close">
          <svg viewBox="0 0 20 20" className="w-5 h-5"><path d="M0 0L20 20M20 0L0 20" stroke="#000" strokeWidth="2" /></svg>
        </button>
      </div>
    </header>
  );
}

function Toolbar() {
  return (
    <div className="flex items-center h-[84px] pl-[6px] pt-[5px] gap-[22px] overflow-hidden">
      {TOOLS.map((group, i) => (
        <div key={i} className="flex items-center gap-[2px] shrink-0">
          {i === 0 && <div className={`w-5 h-[70px] mr-[6px] ${DOTS}`} />}
          {group.map(([name, width]) => (
            <button
              key={name}
              aria-label={name}
              className={`${width} h-[68px] flex items-center justify-center bg-[#eeeeee] border-2 border-[#999999] shadow-[2px_2px_0_white,inset_2px_2px_0_white]`}
            >
              <svg viewBox="0 0 48 48" className="w-12 h-12 overflow-visible shrink-0">{icons[name]}</svg>
            </button>
          ))}
        </div>
      ))}
    </div>
  );
}

function KeywordTable() {
  const [hidden, setHidden] = useState<number[]>([]);
  const toggle = (i: number) =>
    setHidden((prev) => (prev.includes(i) ? prev.filter((n) => n !== i) : [...prev, i]));

  const cell = "h-8 border-r-2 border-b-2 border-[#7a8a99] bg-white px-[2px] py-0 leading-7 align-top";
  const head = "h-11 border-r-2 border-b-2 border-[#7a8a99] p-0 font-normal text-center overflow-hidden";

  return (
    <div className="flex w-[510px] mb-1 shrink-0 border-l-4 border-t-[3px] border-r-[3px] border-b-2 border-[#7a8a99]">
      <div className="w-[472px] overflow-hidden">
        <table className="table-fixed w-[472px] border-separate border-spacing-0 text-[25px] text-[#333333] whitespace-nowrap">
          <colgroup>
            <col className="w-[52px]" />
            <col className="w-[52px]" />
            <col className="w-[72px]" />
            <col className="w-[62px]" />
            <col className="w-[234px]" />
          </colgroup>
          <thead>
            <tr>
              <th className={head}>Vi...</th>
              <th className={head}>C...</th>
              <th className={head}>Cen...</th>
              <th className={head}>Year</th>
              <th className={head}>Keywords</th>
            </tr>
          </thead>
          <tbody>
            {ROWS.map(([count, centrality, year, keyword], i) => (
              <tr key={i}>
                <td className="h-8 border-r-2 border-b-2 border-[#7a8a99] bg-[#eeeeee] p-0">
                  <label className="relative block w-[26px] h-6 ml-[13px]">
                    <input
                      type="checkbox"
                      aria-label={keyword}
                      checked={!hidden.includes(i)}
                      onChange={() => toggle(i)}
                      className="peer absolute inset-0 appearance-none border-2 border-[#7a8a99] bg-linear-to-b from-white to-[#b8cfe5]"
                    />
                    <svg viewBox="0 0 26 24" className="relative hidden peer-checked:block w-[26px] h-6 pointer-events-none">
                      <path d="M6 9H10V13L20 6V9L10 18H6Z" fill="#222" />
                    </svg>
                  </label>
                </td>
                <td className={cell}>{count}</td>
                <td className={cell}>{centrality}</td>
                <td className={cell}>{year}</td>
                <td className={cell}>{keyword}</td>
              </tr>
            ))}
          </tbody>
        </table>
      </div>
      <div className="flex flex-col flex-1 pt-11">
        <button aria-label="Scroll up" className="h-[30px] flex items-center justify-center border-t-2 border-white">
          <Triangle dir="up" />
        </button>
        <div className="flex-1 border-l-2 border-[#b8cfe5] bg-[#eeeeee]">
          <VerticalThumb className="h-[131px]" />
        </div>
        <button aria-label="Scroll down" className="h-[30px] flex items-center justify-center border-t-2 border-[#7a8a99]">
          <Triangle dir="down" />
        </button>
      </div>
    </div>
  );
}

function VerticalThumb({ className }: { className: string }) {
  return (
    <div className={`${className} flex flex-col items-center justify-center gap-[2px] border-2 border-[#6382bf] bg-linear-to-r from-[#e2ebf4] via-white via-20% to-[#b8cfe5]`}>
      <div className="w-5 h-[2px] bg-[#6382bf]" />
      <div className="w-5 h-[2px] bg-[#6382bf]" />
      <div className="w-5 h-[2px] bg-[#6382bf]" />
    </div>
  );
}

function HorizontalThumb({ className }: { className: string }) {
  return (
    <div className={`${className} flex items-center justify-center gap-[2px] border-2 border-[#6382bf] bg-linear-to-b from-[#e2ebf4] via-white via-20% to-[#b8cfe5]`}>
      <div className="w-[2px] h-4 bg-[#6382bf]" />
      <div className="w-[2px] h-4 bg-[#6382bf]" />
      <div className="w-[2px] h-4 bg-[#6382bf]" />
    </div>
  );
}

function ZoomButton({ sign }: { sign: "in" | "out" }) {
  return (
    <button
      aria-label={`Zoom ${sign}`}
      className="w-[46px] h-12 flex items-center justify-center bg-[#c4c4c4] border-4 border-t-[#dddddd] border-l-[#dddddd] border-b-[#777777] border-r-[#777777]"
    >
      <svg viewBox="0 0 38 40" className="w-[38px] h-10">
        <circle cx="16" cy="15" r="11" fill="#d4d4d4" stroke="#111" strokeWidth="2" />
        <path d={sign === "in" ? "M11 15H21M16 10V20" : "M11 15H21"} stroke="#111" strokeWidth="2" />
        <path d="M23 23L34 35" stroke="#000080" strokeWidth="4" />
      </svg>
    </button>
  );
}

function ControlBar() {
  return (
    <div className="flex items-center justify-center gap-[10px] h-[67px] bg-[#eeeeee] text-[#333333]">
      <button className={METAL_BUTTON}>Spotlight</button>
      <button className={METAL_BUTTON}>Citation/Frequency Burst</button>
      <button className={METAL_BUTTON}>&gt;&gt;&gt;</button>
      <input aria-label="Burst status" readOnly className="w-[162px] h-11 border-2 border-[#b8cfe5] bg-[#eeeeee]" />
      <button className={METAL_BUTTON}>&lt;&lt;&lt;</button>
      <ZoomButton sign="out" />
      <div className="flex w-[300px] h-[30px] border-2 border-[#7a8a99]">
        <button aria-label="Zoom level down" className="w-[30px] flex items-center justify-center border-r-2 border-[#7a8a99]">
          <Triangle dir="left" />
        </button>
        <div className="flex-1 flex pl-3 border-t-2 border-[#b8cfe5]">
          <HorizontalThumb className="w-[34px]" />
        </div>
        <button aria-label="Zoom level up" className="w-[30px] flex items-center justify-center border-l-2 border-[#7a8a99]">
          <Triangle dir="right" />
        </button>
      </div>
      <ZoomButton sign="in" />
      <input aria-label="Search" defaultValue="Search: ti:q1 | fu:*" className="w-[336px] h-[42px] px-1 border-2 border-[#7a8a99] bg-white text-[24px]" />
      <label htmlFor="cluster-count" className="text-[24px] font-bold whitespace-nowrap"># clusters</label>
      <input id="cluster-count" readOnly defaultValue="38" className="w-[74px] h-11 px-1 border-2 border-[#b8cfe5] bg-[#eeeeee] text-[24px]" />
    </div>
  );
}

function Logo() {
  return (
    <svg viewBox="0 0 310 140" className="absolute right-[32px] bottom-[22px] w-[310px] h-[140px]">
      <defs>
        <path id="logo-arc" d="M32 60Q160 20 306 64" />
        <linearGradient id="logo-bar" x2="0" y2="1">
          <stop offset="0" stopColor="#a0a0a0" />
          <stop offset="1" stopColor="#f6f6f6" />
        </linearGradient>
      </defs>
      <text fill="#b4b4b4" stroke="#b4b4b4" strokeWidth="1" className="font-['Lato'] text-[54px] font-bold">
        <textPath href="#logo-arc">CiteSpace</textPath>
      </text>
      <g fill="url(#logo-bar)">
        <rect x="59" y="76" width="37" height="28" />
        <rect x="98" y="66" width="37" height="38" />
        <rect x="137" y="54" width="37" height="50" />
        <rect x="175" y="66" width="37" height="38" />
        <rect x="214" y="76" width="37" height="28" />
      </g>
      <path d="M9 106C60 108 120 112 154 130C120 118 60 112 7 111ZM301 106C250 108 190 112 156 130C190 118 250 112 303 111Z" fill="#b0b0b0" />
      <path d="M4 121C60 120 110 122 154 130C110 127 60 126 2 127ZM306 121C250 120 200 122 156 130C200 127 250 126 308 127Z" fill="#a8a8a8" />
    </svg>
  );
}

function Timeline() {
  return (
    <div className="relative flex-1 min-w-0 bg-white overflow-hidden">
      {CLUSTERS.map((c) => (
        <h2
          key={c.name}
          className={`absolute h-[51px] leading-[50px] px-[2px] rounded-sm bg-[#fff2f2] text-[36px] font-bold whitespace-nowrap ${
            c.bar === GOLD ? "text-[#b0702c]" : "text-[#b58520]"
          }`}
          style={{ left: 2179 - ORIGIN_X, top: c.y - 37 - ORIGIN_Y }}
        >
          {c.name}
        </h2>
      ))}
      <svg viewBox={`${ORIGIN_X} ${ORIGIN_Y} 1900 1500`} className="absolute top-0 left-0 w-[1900px] h-[1500px]">
        <g fill="#ff00ff" textAnchor="middle" className="text-[18px] font-bold">
          {AXIS.map(([x, year]) => (
            <text key={year} x={x} y="446">{year}</text>
          ))}
        </g>
        {CLUSTERS.map((c) => (
          <g key={c.name}>
            <path d={`M744 ${c.y}H2151`} stroke="#fcbc4e" strokeWidth="2" strokeDasharray="7 3" />
            <path d={`M${c.from} ${c.y}H${c.to}`} stroke={c.bar} strokeWidth="6" />
            {c.gaps.map((x) => (
              <rect key={x} x={x - 2} y={c.y - 2} width="4" height="4" fill="#fffbe0" />
            ))}
          </g>
        ))}
        <g fill="none" strokeWidth="2">
          {HOPS.map(([row, x1, x2, color, opacity], i) => {
            const y = CLUSTERS[row].y;
            return (
              <path key={i} d={`M${x1} ${y}Q${(x1 + x2) / 2} ${y - (x2 - x1) / 3} ${x2} ${y}`} stroke={color} strokeOpacity={opacity * 0.9} />
            );
          })}
          {LINKS.map(([d, color, opacity, width], i) => (
            <path key={i} d={d} stroke={color} strokeOpacity={opacity * 0.7} strokeWidth={width} />
          ))}
        </g>
        {NODES.map(([x, y, r, halo, core], i) => (
          <g key={i}>
            <circle cx={x} cy={y} r={r} fill={halo} fillOpacity="0.55" />
            <circle cx={x} cy={y} r={r * 0.75} fill={OLIVE} fillOpacity="0.5" />
            <circle cx={x} cy={y} r={r * 0.6} fill={core} fillOpacity="0.5" />
            <circle cx={x} cy={y} r={r * 0.25} fill={core} />
          </g>
        ))}
        {CLUSTERS.map((c) => (
          <g key={c.name} fill={c.bar === GOLD ? "#80522a" : "#7c6020"} className="text-[25px] italic">
            {c.labels.map(([line, x, label]) => (
              <text key={`${line}-${x}`} x={x} y={c.y + 31 + line * 25}>{label}</text>
            ))}
          </g>
        ))}
      </svg>
      <Logo />
    </div>
  );
}

function GraphPanel() {
  return (
    <main className="flex-1 min-w-0 flex flex-col border-l-2 border-t-[3px] border-[#7a8a99] mr-1 mb-1">
      <ControlBar />
      <div className="flex h-5 shrink-0 pl-[3px]">
        {YEARS.map(([year, color]) => (
          <div key={year} className={`flex-1 ${color} text-center font-['Liberation_Serif',serif] text-[20px] leading-[22px] font-bold text-[#ff0000]`}>
            {year}
          </div>
        ))}
      </div>
      <div className="flex flex-1 min-h-0">
        <Timeline />
        <div className="w-8 flex flex-col border-x-2 border-[#7a8a99] bg-[#eeeeee]">
          <button aria-label="Canvas up" className="h-8 flex items-center justify-center border-y-2 border-[#7a8a99]">
            <Triangle dir="up" />
          </button>
          <div className="flex-1 pt-[504px] border-l-2 border-[#b8cfe5]">
            <VerticalThumb className="h-[102px]" />
          </div>
          <button aria-label="Canvas down" className="h-8 flex items-center justify-center border-y-2 border-[#7a8a99]">
            <Triangle dir="down" />
          </button>
        </div>
      </div>
      <div className="flex h-8 shrink-0 border-y-2 border-[#7a8a99] bg-[#eeeeee]">
        <button aria-label="Canvas left" className="w-8 flex items-center justify-center border-r-2 border-[#7a8a99]">
          <Triangle dir="left" />
        </button>
        <div className="flex-1 flex pl-[752px] border-t-2 border-[#b8cfe5]">
          <HorizontalThumb className="w-[160px]" />
        </div>
        <button aria-label="Canvas right" className="w-8 flex items-center justify-center border-x-2 border-[#7a8a99]">
          <Triangle dir="right" />
        </button>
      </div>
    </main>
  );
}

// volume meter that sits on the left edge of the desktop
function LevelMeter() {
  const bars = Array.from({ length: 23 }, (_, i) => i);
  return (
    <div className="absolute left-0 top-[508px] w-[22px] h-[116px] rounded-r-md border-2 border-l-0 border-[#22222e] bg-[#4a4a5c]/90 pt-3 pl-1 flex flex-col gap-[2px]">
      {bars.map((i) => (
        <div key={i} className={`w-2 h-[2px] ${i < 13 ? "bg-[#22222e] ml-[2px]" : i < 18 ? "bg-[#b0e870]" : "bg-[#58e8b0]"}`} />
      ))}
    </div>
  );
}

export default function App() {
  return (
    <div className="relative h-screen flex flex-col overflow-hidden bg-[#eeeeee] font-['Liberation_Sans',Arial,sans-serif] text-[#333333]">
      <TitleBar />
      <div className="shrink-0 bg-linear-to-b from-white to-[#dadada]">
        <nav className="flex gap-6 h-[42px] items-center pl-[10px] text-[24px] font-bold">
          {MENUS.map((m) => (
            <button key={m}>{m}</button>
          ))}
        </nav>
        <Toolbar />
      </div>
      <div className="h-1 shrink-0 border-t-2 border-white bg-[#cccccc]" />
      <div className="flex flex-1 min-h-0">
        <KeywordTable />
        <div className={`w-[19px] shrink-0 pl-[2px] pt-2 ${DOTS}`}>
          <svg viewBox="0 0 12 36" className="w-3 h-9" fill="#5a7ac8">
            <rect width="12" height="36" fill="#eee" />
            <path d="M10 0V14L1 7ZM2 20V34L10 27Z" />
          </svg>
        </div>
        <GraphPanel />
      </div>
      <LevelMeter />
    </div>
  );
}
